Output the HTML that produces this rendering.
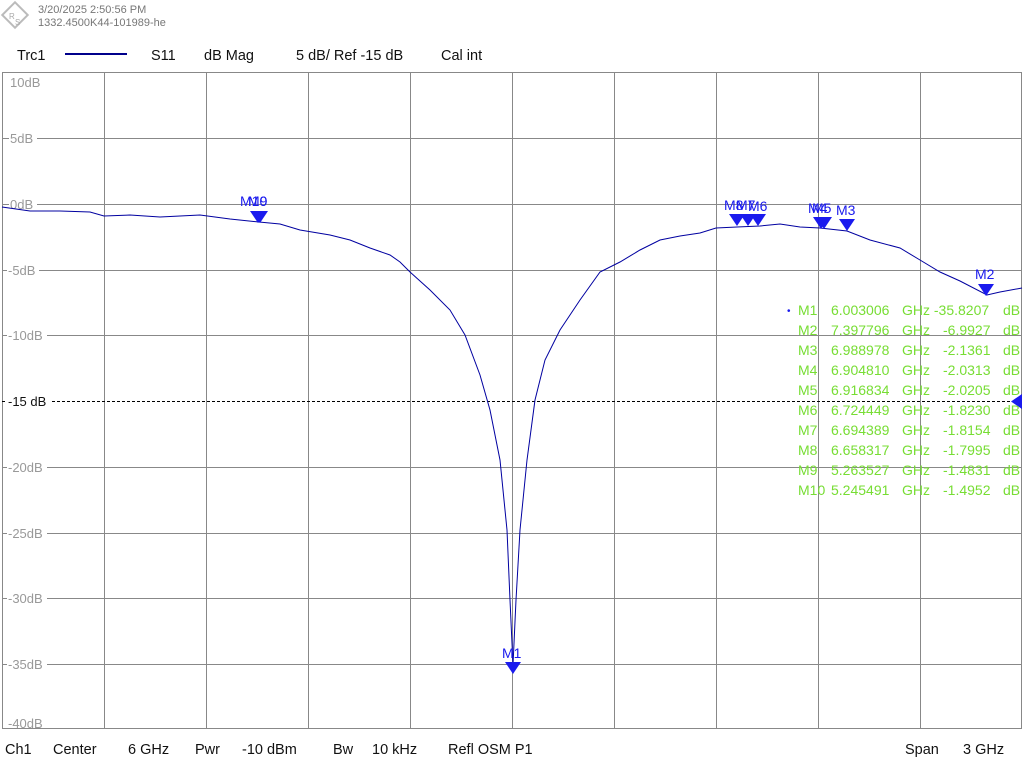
<!DOCTYPE html>
<html><head><meta charset="utf-8"><style>
html,body{margin:0;padding:0;background:#fff;width:1024px;height:768px;overflow:hidden}
svg{display:block}
</style></head><body>
<svg width="1024" height="768" xmlns="http://www.w3.org/2000/svg" font-family="Liberation Sans, DejaVu Sans, sans-serif">
<rect width="1024" height="768" fill="#fff"/>
<g transform="translate(15,15) rotate(45)" fill="none" stroke="#bbb" stroke-width="2"><rect x="-9" y="-9" width="18" height="18"/></g>
<text x="9" y="19" font-size="8" fill="#aaa">R</text><text x="15" y="25" font-size="8" fill="#aaa">S</text>
<text x="38" y="13" font-size="11" fill="#777">3/20/2025 2:50:56 PM</text>
<text x="38" y="26" font-size="11" fill="#777">1332.4500K44-101989-he</text>
<g font-size="14.5" fill="#111">
<text x="17" y="60">Trc1</text>
<line x1="65" y1="54" x2="127" y2="54" stroke="#00008b" stroke-width="2"/>
<text x="151" y="60">S11</text>
<text x="204" y="60">dB Mag</text>
<text x="296" y="60">5 dB/ Ref -15 dB</text>
<text x="441" y="60">Cal int</text>
</g>
<g stroke="#888" stroke-width="1" fill="none">
<rect x="2.5" y="72.5" width="1019" height="656"/>
<path d="M104.5 72V729M206.5 72V729M308.5 72V729M410.5 72V729M512.5 72V729M614.5 72V729M716.5 72V729M818.5 72V729M920.5 72V729"/>
<path d="M2 138.5H1022M2 204.5H1022M2 270.5H1022M2 335.5H1022M2 467.5H1022M2 533.5H1022M2 598.5H1022M2 664.5H1022"/>
</g>
<line x1="2" y1="401.5" x2="1022" y2="401.5" stroke="#000" stroke-dasharray="3,2"/>
<g font-size="13" fill="#999">
<rect x="9" y="75" width="34" height="14" fill="#fff"/><text x="10" y="87">10dB</text>
<rect x="9" y="132" width="28" height="13" fill="#fff"/><text x="10" y="143">5dB</text>
<rect x="9" y="198" width="28" height="13" fill="#fff"/><text x="10" y="209">0dB</text>
<rect x="7" y="264" width="32" height="13" fill="#fff"/><text x="8" y="275">-5dB</text>
<rect x="7" y="329" width="40" height="13" fill="#fff"/><text x="8" y="340">-10dB</text>
<rect x="7" y="461" width="40" height="13" fill="#fff"/><text x="8" y="472">-20dB</text>
<rect x="7" y="527" width="40" height="13" fill="#fff"/><text x="8" y="538">-25dB</text>
<rect x="7" y="592" width="40" height="13" fill="#fff"/><text x="8" y="603">-30dB</text>
<rect x="7" y="658" width="40" height="13" fill="#fff"/><text x="8" y="669">-35dB</text>
<text x="8" y="728">-40dB</text>
</g>
<rect x="7" y="395" width="44" height="14" fill="#fff"/><text x="8" y="406" font-size="13" fill="#111">-15 dB</text>
<polyline fill="none" stroke="#0000a0" stroke-width="1" points="2,207 30,211 60,211 90,212 104,216 130,215 160,217 200,215 230,219 259,222 280,224 300,230 330,235 350,240 370,248 390,255 400,262 410,272 430,290 450,310 465,335 480,375 490,410 500,460 507,530 510,600 513,665 516,600 520,530 527,460 535,400 545,360 560,330 580,300 600,272 620,262 640,250 660,240 680,236 700,233 716,228 737,227 760,226 780,224 800,227 820,228 847,231 870,240 900,248 920,260 940,272 960,281 987,295 1000,292 1022,288"/>
<g fill="#1a1aee">
<path d="M250 211h16l-8 12z"/><path d="M252 211h16l-8 12z"/>
<path d="M729 214h16l-8 12z"/><path d="M740 214h16l-8 12z"/><path d="M750 214h16l-8 12z"/>
<path d="M813 217h16l-8 12z"/><path d="M816 217h16l-8 12z"/><path d="M839 219h16l-8 12z"/>
<path d="M978 284h16l-8 12z"/><path d="M505 662h16l-8 12z"/>
<path d="M1022 394v15l-11-7.5z"/>
</g>
<g font-size="14" fill="#1a1aee">
<text x="240" y="206">M10</text><text x="248" y="206">M9</text>
<text x="724" y="210">M8</text><text x="736" y="210">M7</text><text x="748" y="211">M6</text>
<text x="808" y="213">M4</text><text x="812" y="213">M5</text><text x="836" y="215">M3</text>
<text x="975" y="279">M2</text><text x="502" y="658">M1</text>
</g>
<text x="787" y="314" font-size="10" fill="#1a1aee">•</text>
<g font-size="14" fill="#77dd33">
<text x="798" y="315">M1</text><text x="831" y="315">6.003006</text><text x="902" y="315">GHz -35.8207</text><text x="1003" y="315">dB</text>
<text x="798" y="335">M2</text><text x="831" y="335">7.397796</text><text x="902" y="335">GHz</text><text x="943" y="335">-6.9927</text><text x="1003" y="335">dB</text>
<text x="798" y="355">M3</text><text x="831" y="355">6.988978</text><text x="902" y="355">GHz</text><text x="943" y="355">-2.1361</text><text x="1003" y="355">dB</text>
<text x="798" y="375">M4</text><text x="831" y="375">6.904810</text><text x="902" y="375">GHz</text><text x="943" y="375">-2.0313</text><text x="1003" y="375">dB</text>
<text x="798" y="395">M5</text><text x="831" y="395">6.916834</text><text x="902" y="395">GHz</text><text x="943" y="395">-2.0205</text><text x="1003" y="395">dB</text>
<text x="798" y="415">M6</text><text x="831" y="415">6.724449</text><text x="902" y="415">GHz</text><text x="943" y="415">-1.8230</text><text x="1003" y="415">dB</text>
<text x="798" y="435">M7</text><text x="831" y="435">6.694389</text><text x="902" y="435">GHz</text><text x="943" y="435">-1.8154</text><text x="1003" y="435">dB</text>
<text x="798" y="455">M8</text><text x="831" y="455">6.658317</text><text x="902" y="455">GHz</text><text x="943" y="455">-1.7995</text><text x="1003" y="455">dB</text>
<text x="798" y="475">M9</text><text x="831" y="475">5.263527</text><text x="902" y="475">GHz</text><text x="943" y="475">-1.4831</text><text x="1003" y="475">dB</text>
<text x="798" y="495">M10</text><text x="831" y="495">5.245491</text><text x="902" y="495">GHz</text><text x="943" y="495">-1.4952</text><text x="1003" y="495">dB</text>
</g>
<g font-size="14.5" fill="#111">
<text x="5" y="754">Ch1</text><text x="53" y="754">Center</text><text x="128" y="754">6 GHz</text>
<text x="195" y="754">Pwr</text><text x="242" y="754">-10 dBm</text>
<text x="333" y="754">Bw</text><text x="372" y="754">10 kHz</text><text x="448" y="754">Refl OSM P1</text>
<text x="905" y="754">Span</text><text x="963" y="754">3 GHz</text>
</g>
</svg>
</body></html>
